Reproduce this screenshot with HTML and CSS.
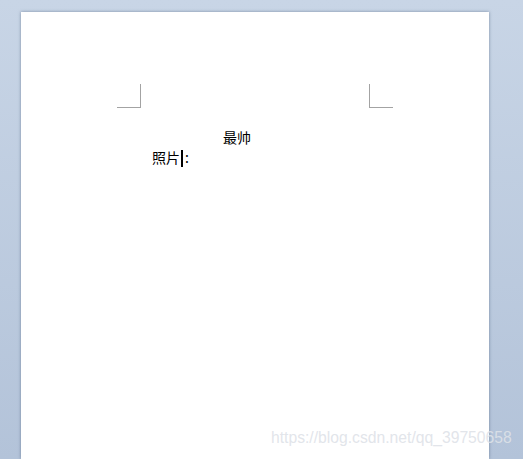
FILE: index.html
```html
<!DOCTYPE html>
<html lang="zh-CN">
<head>
  <meta charset="UTF-8">
  <meta name="viewport" content="width=device-width, initial-scale=1.0">
  <title>文档</title>
  <link rel="stylesheet" href="styles.css">
</head>
<body>
  <div class="page">
    <div class="margins">
      <span class="corner corner-left"></span>
      <span class="corner corner-right"></span>
    </div>
    <div class="text">
      <p class="line line-title">最帅</p>
      <p class="line line-photo">照片<span class="caret"></span>:</p>
    </div>
  </div>
  <div class="watermark">https://blog.csdn.net/qq_39750658</div>
</body>
</html>
```

FILE: styles.css
```css
/* Workspace behind the page */
body {
  margin: 0;
  padding: 12px 0 0 21px;
  height: 459px;
  box-sizing: border-box;
  overflow: hidden;
  background: linear-gradient(to bottom, #c8d5e6, #b3c3d9);
  font-family: "Noto Sans CJK SC", "Liberation Sans", sans-serif;
}

.page {
  width: 468px;
  height: 447px;
  background-color: #fff;
  box-shadow: 0 0 3px rgba(60, 80, 110, 0.55);
}

/* Margin marks */
.margins {
  display: flex;
  justify-content: space-between;
  padding: 72px 96px 0;
}

.corner {
  width: 23px;
  height: 23px;
  border-bottom: 1px solid #a3a3a3;
}

.corner-left {
  border-right: 1px solid #a3a3a3;
}

.corner-right {
  border-left: 1px solid #a3a3a3;
}

/* Document text */
.text {
  padding-top: 19px;
}

.line {
  margin: 0;
  font-size: 14px;
  line-height: 20px;
  color: #000;
}

.line-title {
  padding-left: 202px;
}

.line-photo {
  padding-left: 131px;
}

.caret {
  display: inline-block;
  width: 2px;
  height: 17px;
  margin: 0 2px 0 1px;
  vertical-align: -4px;
  background-color: #000;
}

.watermark {
  position: absolute;
  left: 271px;
  top: 429px;
  font-family: "Liberation Sans", sans-serif;
  font-size: 15.7px;
  color: rgba(222, 226, 232, 0.9);
}
```
